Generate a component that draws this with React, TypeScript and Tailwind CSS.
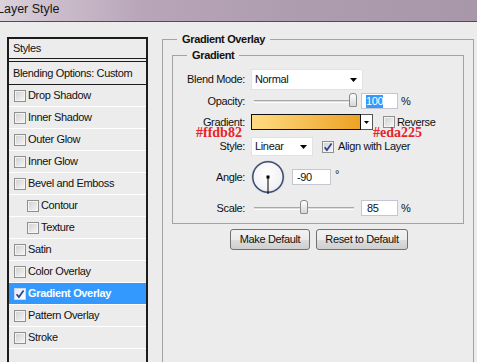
import React from "react";

const Check = ({ checked = false, light = false }: { checked?: boolean; light?: boolean }) => (
  <span
    className={
      light
        ? "flex w-[12px] h-[12px] shrink-0 items-center justify-center border border-[#c9d6ee] bg-[linear-gradient(135deg,#e4ebf7,#ffffff)]"
        : "flex w-[12px] h-[12px] shrink-0 items-center justify-center border border-[#8e8f8f] bg-[linear-gradient(135deg,#cfcfcf,#f7f7f7)] shadow-[inset_0_0_0_1px_#f4f4f4]"
    }
  >
    {checked && (
      <svg width="10" height="10" viewBox="0 0 10 10">
        <path d="M1.6 5.2 L3.9 8 L8.6 1.6" fill="none" stroke="#2d3f91" strokeWidth="1.7" />
      </svg>
    )}
  </span>
);

const Arrow = () => (
  <svg width="7" height="4" viewBox="0 0 7 4">
    <polygon points="0,0 7,0 3.5,4" fill="#000" />
  </svg>
);

const Slider = ({ thumb }: { thumb: "a" | "b" }) => (
  <div className="relative ml-[9px] h-[16px] w-[103px]">
    <div className="absolute left-0 top-[7px] h-[3px] w-[100px] border-t border-[#a9a9a9] bg-[#dcdcdc] border-b border-b-white" />
    <div
      className={
        (thumb === "a" ? "left-[95px]" : "left-[46px]") +
        " absolute top-0 h-[14px] w-[8px] rounded-t-[3px] rounded-b-[1px] border border-[#8a8a8a] bg-[linear-gradient(180deg,#ffffff,#d6d6d6)]"
      }
    />
  </div>
);

const items: { label: string; indent?: boolean; active?: boolean }[] = [
  { label: "Drop Shadow" },
  { label: "Inner Shadow" },
  { label: "Outer Glow" },
  { label: "Inner Glow" },
  { label: "Bevel and Emboss" },
  { label: "Contour", indent: true },
  { label: "Texture", indent: true },
  { label: "Satin" },
  { label: "Color Overlay" },
  { label: "Gradient Overlay", active: true },
  { label: "Pattern Overlay" },
  { label: "Stroke" },
];

export default function App() {
  return (
    <div className="h-[362px] w-[477px] overflow-hidden bg-[#ececec] font-['Liberation_Sans',Arial,sans-serif] text-[11px] leading-[13px] tracking-[-0.35px] text-[#111]">
      {/* Title bar */}
      <div className="flex h-[21px] items-center bg-[linear-gradient(90deg,#dcd2db_0%,#cbbccb_12%,#b8a6b8_30%,#ae9dae_60%,#a797a9_100%)] pb-[3px]">
        <span className="ml-[-3px] text-[12.5px] leading-[15px] tracking-[0px] text-[#161616]">Layer Style</span>
      </div>
      <div className="h-[1px] bg-[#4e4e4e]" />

      <div className="flex">
        {/* Left panel */}
        <div className="ml-[7px] mt-[15px] flex h-[400px] w-[141px] flex-col border-x-2 border-t-2 border-[#1c1c1c]">
          <div className="flex h-[20px] items-center border-b border-[#1c1c1c] pl-[4px]">Styles</div>
          <div className="h-[2px]" />
          <div className="flex h-[24px] items-center border-y border-[#1c1c1c] pl-[4px]">Blending Options: Custom</div>
          {items.map((it) => (
            <div
              key={it.label}
              className={
                (it.indent ? "pl-[18px] " : "pl-[5px] ") +
                (it.active ? "bg-[#3399ff] font-bold text-white " : "") +
                "flex h-[22px] items-center gap-[2px] border-b border-white"
              }
            >
              <Check checked={it.active} light={it.active} />
              <span>{it.label}</span>
            </div>
          ))}
        </div>

        {/* Right side */}
        <fieldset className="ml-[14px] mt-[11px] h-[420px] w-[312px] border border-[#a3a3a3]">
          <legend className="ml-[14px] px-[5px] font-bold leading-[13px]">Gradient Overlay</legend>
          <div className="mx-[9px] flex flex-col">
            <fieldset className="mt-[3px] border border-[#a3a3a3]">
              <legend className="ml-[14px] px-[5px] font-bold leading-[13px]">Gradient</legend>
              <div className="flex flex-col pb-[7px] pt-[7px]">
                {/* Blend Mode */}
                <div className="flex h-[21px] items-center">
                  <span className="w-[72px] text-right">Blend Mode:</span>
                  <div className="ml-[6px] flex h-[21px] w-[112px] items-center justify-between border border-[#e2e2e2] bg-white pl-[3px] pr-[5px]">
                    <span>Normal</span>
                    <Arrow />
                  </div>
                </div>
                {/* Opacity */}
                <div className="mt-[3px] flex h-[16px] items-center">
                  <span className="w-[72px] text-right">Opacity:</span>
                  <Slider thumb="a" />
                  <div className="ml-[4px] flex h-[16px] w-[37px] items-center border border-[#c4c7cf] bg-white pl-[4px]">
                    <span className="bg-[#3399ff] text-white">100</span>
                  </div>
                  <span className="ml-[3px]">%</span>
                </div>
                {/* Gradient */}
                <div className="relative mt-[5px] flex h-[16px] items-center">
                  <span className="w-[72px] text-right">Gradient:</span>
                  <div className="ml-[6px] h-[16px] w-[110px] border border-[#111] bg-[linear-gradient(90deg,#ffdb82,#eda225)]" />
                  <div className="flex h-[16px] w-[12px] items-center justify-center border border-[#555] border-l-0 bg-white">
                    <svg width="5" height="3" viewBox="0 0 5 3">
                      <polygon points="0,0 5,0 2.5,3" fill="#000" />
                    </svg>
                  </div>
                  <span className="ml-[10px]">
                    <Check />
                  </span>
                  <span className="ml-[2px]">Reverse</span>
                  <span className="absolute left-[23px] top-[12px] font-['Liberation_Serif',serif] text-[14px] font-bold leading-[14px] tracking-[0px] text-[#e5252b]">
                    #ffdb82
                  </span>
                  <span className="absolute left-[200px] top-[12px] font-['Liberation_Serif',serif] text-[14px] font-bold leading-[14px] tracking-[0px] text-[#e5252b]">
                    #eda225
                  </span>
                </div>
                {/* Style */}
                <div className="mt-[7px] flex h-[19px] items-center">
                  <span className="w-[72px] text-right">Style:</span>
                  <div className="ml-[6px] flex h-[19px] w-[62px] items-center justify-between border border-[#e2e2e2] bg-white pl-[3px] pr-[5px]">
                    <span>Linear</span>
                    <Arrow />
                  </div>
                  <span className="ml-[9px]">
                    <Check checked />
                  </span>
                  <span className="ml-[4px]">Align with Layer</span>
                </div>
                {/* Angle */}
                <div className="mt-[4px] flex h-[34px] items-center">
                  <span className="w-[72px] text-right">Angle:</span>
                  <svg className="ml-[6px]" width="34" height="34" viewBox="0 0 34 34">
                    <defs>
                      <radialGradient id="dial" cx="0.45" cy="0.4" r="0.65">
                        <stop offset="0" stopColor="#ffffff" />
                        <stop offset="0.8" stopColor="#f2f2f5" />
                        <stop offset="1" stopColor="#d8dae2" />
                      </radialGradient>
                    </defs>
                    <circle cx="17" cy="17" r="16.3" fill="#e8e9ee" stroke="#c9ccd6" strokeWidth="0.8" />
                    <circle cx="17" cy="17" r="15.2" fill="url(#dial)" stroke="#3d4a70" strokeWidth="1.5" />
                    <line x1="17" y1="17" x2="17" y2="34" stroke="#000" strokeWidth="1" />
                    <rect x="15.5" y="15.5" width="3" height="3" fill="#000" />
                  </svg>
                  <div className="ml-[7px] flex h-[16px] w-[39px] items-center border border-[#c4c7cf] bg-white pl-[4px]">
                    -90
                  </div>
                  <span className="ml-[4px] self-start pt-[8px]">°</span>
                </div>
                {/* Scale */}
                <div className="mt-[6px] flex h-[16px] items-center">
                  <span className="w-[72px] text-right">Scale:</span>
                  <Slider thumb="b" />
                  <div className="ml-[4px] flex h-[16px] w-[37px] items-center border border-[#c4c7cf] bg-white pl-[5px]">
                    85
                  </div>
                  <span className="ml-[3px]">%</span>
                </div>
              </div>
            </fieldset>
            <div className="ml-[58px] mt-[5px] flex gap-[6px]">
              <button className="flex h-[21px] w-[80px] items-center justify-center rounded-[3px] border border-[#707070] bg-[linear-gradient(180deg,#f2f2f2_0%,#ebebeb_50%,#dddddd_51%,#cfcfcf_100%)] text-[#111]">
                Make Default
              </button>
              <button className="flex h-[21px] w-[92px] items-center justify-center rounded-[3px] border border-[#707070] bg-[linear-gradient(180deg,#f2f2f2_0%,#ebebeb_50%,#dddddd_51%,#cfcfcf_100%)] text-[#111]">
                Reset to Default
              </button>
            </div>
          </div>
        </fieldset>
      </div>
    </div>
  );
}
